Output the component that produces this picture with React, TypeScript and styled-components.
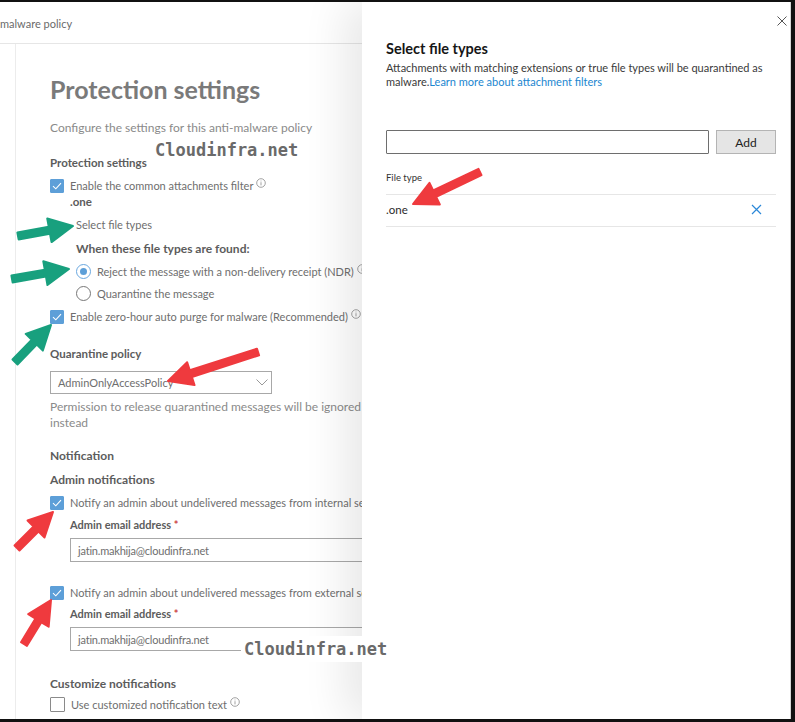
import React from "react";
import styled, { createGlobalStyle } from "styled-components";

const GlobalStyle = createGlobalStyle`
  html, body { margin: 0; padding: 0; background: #fff; }
  body { font-family: "Segoe UI", Lato, "Open Sans", sans-serif; }
  * { box-sizing: border-box; }
`;

const Frame = styled.div`
  position: relative;
  width: 795px;
  height: 722px;
  border-top: 2px solid #111;
  border-right: 4px solid #111;
  border-bottom: 3px solid #111;
  display: flex;
  overflow: hidden;
  background: #fff;
`;

const LeftPage = styled.div`
  width: 362px;
  flex-shrink: 0;
  display: flex;
  flex-direction: column;
  overflow: hidden;
  background: #fff;
`;

const PageHeader = styled.div`
  height: 42px;
  flex-shrink: 0;
  border-bottom: 1px solid #e6e6e6;
  display: flex;
  align-items: center;
  font-size: 11px;
  color: #6a6a6a;
  padding-top: 2px;
`;

const PageBody = styled.div`
  flex: 1;
  display: flex;
`;

const Nav = styled.div`
  width: 16px;
  flex-shrink: 0;
  border-right: 1px solid #ececec;
`;

const Content = styled.div`
  padding-left: 34px;
  display: flex;
  flex-direction: column;
  white-space: nowrap;
`;

const Heading = styled.h1`
  margin: 28px 0 0;
  font-size: 25px;
  line-height: 34px;
  font-weight: 700;
  color: #7a7a7a;
`;

const Muted = styled.div<{ $mt: number }>`
  margin-top: ${(p) => p.$mt}px;
  font-size: 12px;
  line-height: 16px;
  color: #8a8a8a;
`;

const SubHead = styled.div<{ $mt: number; $indent?: number; $size?: number }>`
  margin-top: ${(p) => p.$mt}px;
  margin-left: ${(p) => p.$indent ?? 0}px;
  font-size: ${(p) => p.$size ?? 11.5}px;
  line-height: 16px;
  font-weight: 700;
  color: #5c5c5c;
`;

const Plain = styled.div<{ $mt: number; $indent?: number }>`
  margin-top: ${(p) => p.$mt}px;
  margin-left: ${(p) => p.$indent ?? 0}px;
  font-size: 11px;
  line-height: 16px;
  color: #6e6e6e;
`;

const Row = styled.div<{ $mt: number; $indent?: number }>`
  margin-top: ${(p) => p.$mt}px;
  margin-left: ${(p) => p.$indent ?? 0}px;
  height: 17px;
  display: flex;
  align-items: center;
  gap: 6px;
  font-size: 11px;
  color: #6e6e6e;
`;

const Check = styled.span<{ $on?: boolean }>`
  width: ${(p) => (p.$on ? 14 : 15)}px;
  height: ${(p) => (p.$on ? 14 : 15)}px;
  flex-shrink: 0;
  border-radius: 1px;
  display: inline-flex;
  align-items: center;
  justify-content: center;
  background: ${(p) => (p.$on ? "#5d9fd8" : "#fff")};
  border: 1px solid ${(p) => (p.$on ? "#5d9fd8" : "#8a8a8a")};
`;

const Radio = styled.span<{ $on?: boolean }>`
  width: 15px;
  height: 15px;
  flex-shrink: 0;
  border-radius: 50%;
  border: 1px solid ${(p) => (p.$on ? "#6aa8e0" : "#777")};
  display: inline-flex;
  align-items: center;
  justify-content: center;
  &::after {
    content: "";
    width: 7px;
    height: 7px;
    border-radius: 50%;
    background: ${(p) => (p.$on ? "#5d9fd8" : "transparent")};
  }
`;

const Select = styled.div`
  margin-top: 9px;
  width: 222px;
  height: 23px;
  border: 1px solid #a8a8a8;
  display: flex;
  align-items: center;
  justify-content: space-between;
  padding: 0 3px 0 7px;
  font-size: 11px;
  color: #6e6e6e;
`;

const TextInput = styled.div<{ $mt: number }>`
  margin-top: ${(p) => p.$mt}px;
  margin-left: 20px;
  width: 320px;
  height: 24px;
  border: 1px solid #a8a8a8;
  display: flex;
  align-items: center;
  padding-left: 7px;
  font-size: 11px;
  color: #6e6e6e;
  letter-spacing: -0.2px;
`;

const Required = styled.span`
  color: #c44;
`;

const Panel = styled.div`
  position: relative;
  flex: 1;
  background: #fff;
  border-right: 1px solid #d6d6d6;
  padding: 37px 14px 0 24px;
  box-shadow: -18px 0 40px rgba(0, 0, 0, 0.09);
  display: flex;
  flex-direction: column;
`;

const CloseButton = styled.span`
  position: absolute;
  top: 13px;
  right: 2px;
  width: 12px;
  height: 12px;
  display: flex;
`;

const PanelTitle = styled.h2`
  margin: 0;
  font-size: 14.5px;
  line-height: 20px;
  font-weight: 700;
  color: #161616;
`;

const PanelText = styled.p`
  margin: 2px 0 0;
  font-size: 11px;
  line-height: 14px;
  color: #3a3a3a;
`;

const Link = styled.a`
  color: #1a86d0;
  text-decoration: none;
`;

const AddRow = styled.div`
  margin-top: 41px;
  display: flex;
  gap: 7px;
`;

const AddInput = styled.div`
  flex: 1;
  height: 24px;
  border: 1px solid #6e6e6e;
  border-radius: 1px;
`;

const AddButton = styled.button`
  width: 60px;
  height: 24px;
  border: 1px solid #b4b4b4;
  background: #e5e5e5;
  font-family: inherit;
  font-size: 12px;
  color: #222;
  padding: 0;
`;

const TableHead = styled.div`
  margin-top: 18px;
  font-size: 9.5px;
  line-height: 12px;
  color: #333;
  padding-bottom: 10px;
  border-bottom: 1px solid #e6e6e6;
`;

const TableRow = styled.div`
  height: 32px;
  display: flex;
  align-items: center;
  justify-content: space-between;
  padding-right: 14px;
  padding-bottom: 3px;
  border-bottom: 1px solid #e6e6e6;
  font-size: 11.5px;
  color: #2a2a2a;
`;

const Watermark = styled.div<{ $x: number; $y: number }>`
  position: absolute;
  left: ${(p) => p.$x}px;
  top: ${(p) => p.$y}px;
  padding: 2px 3px;
  background: #fff;
  font-family: "DejaVu Sans Mono", monospace;
  font-weight: 700;
  font-size: 17px;
  line-height: 22px;
  color: #6a6a6a;
  z-index: 3;
`;

const Overlay = styled.svg`
  position: absolute;
  left: 0;
  top: -2px;
  width: 795px;
  height: 722px;
  pointer-events: none;
  z-index: 4;
`;

const Info = () => (
  <svg width="10" height="10" viewBox="0 0 10 10" style={{ marginLeft: -3, marginTop: -6 }}>
    <circle cx="5" cy="5" r="4.3" fill="none" stroke="#8a8a8a" strokeWidth="0.8" />
    <rect x="4.6" y="4.2" width="0.8" height="3.2" fill="#8a8a8a" />
    <rect x="4.6" y="2.6" width="0.8" height="0.8" fill="#8a8a8a" />
  </svg>
);

const Tick = () => (
  <svg width="10" height="8" viewBox="0 0 10 8">
    <path d="M1 4.2 L3.8 6.8 L9 1.2" fill="none" stroke="#fff" strokeWidth="1.1" />
  </svg>
);

const Chevron = () => (
  <svg width="12" height="7" viewBox="0 0 12 7">
    <path d="M0.5 0.5 L6 6 L11.5 0.5" fill="none" stroke="#999" strokeWidth="1" />
  </svg>
);

type ArrowProps = { x1: number; y1: number; x2: number; y2: number; color: string };

const Arrow = ({ x1, y1, x2, y2, color }: ArrowProps) => {
  const dx = x2 - x1;
  const dy = y2 - y1;
  const len = Math.hypot(dx, dy);
  const ux = dx / len;
  const uy = dy / len;
  const nx = -uy;
  const ny = ux;
  const head = 24;
  const half = 12;
  const shaft = 3.5;
  const bx = x2 - ux * head;
  const by = y2 - uy * head;
  const pts = [
    [x1 + nx * shaft, y1 + ny * shaft],
    [bx + nx * shaft, by + ny * shaft],
    [bx + nx * half, by + ny * half],
    [x2, y2],
    [bx - nx * half, by - ny * half],
    [bx - nx * shaft, by - ny * shaft],
    [x1 - nx * shaft, y1 - ny * shaft],
  ]
    .map((p) => p.join(","))
    .join(" ");
  return <polygon points={pts} fill={color} stroke={color} strokeWidth="2" strokeLinejoin="round" />;
};

const green = "#18a07e";
const red = "#ef3a3e";

export default function App() {
  return (
    <>
      <GlobalStyle />
      <Frame>
        <LeftPage>
          <PageHeader>malware policy</PageHeader>
          <PageBody>
            <Nav />
            <Content>
              <Heading>Protection settings</Heading>
              <Muted $mt={14}>Configure the settings for this anti-malware policy</Muted>
              <SubHead $mt={19}>Protection settings</SubHead>
              <Row $mt={6}>
                <Check $on><Tick /></Check>
                Enable the common attachments filter <Info />
              </Row>
              <SubHead $mt={0} $indent={20}>.one</SubHead>
              <Plain $mt={7} $indent={26}>Select file types</Plain>
              <SubHead $mt={8} $indent={26} $size={12}>When these file types are found:</SubHead>
              <Row $mt={6} $indent={26}>
                <Radio $on />
                Reject the message with a non-delivery receipt (NDR) <Info />
              </Row>
              <Row $mt={5} $indent={26}>
                <Radio />
                Quarantine the message
              </Row>
              <Row $mt={6}>
                <Check $on><Tick /></Check>
                Enable zero-hour auto purge for malware (Recommended) <Info />
              </Row>
              <SubHead $mt={21}>Quarantine policy</SubHead>
              <Select>
                AdminOnlyAccessPolicy
                <Chevron />
              </Select>
              <Muted $mt={5}>
                Permission to release quarantined messages will be ignored
                <br />
                instead
              </Muted>
              <SubHead $mt={17} $size={12}>Notification</SubHead>
              <SubHead $mt={8} $size={12}>Admin notifications</SubHead>
              <Row $mt={6}>
                <Check $on><Tick /></Check>
                Notify an admin about undelivered messages from internal senders
              </Row>
              <SubHead $mt={6} $indent={20} $size={11}>
                Admin email address <Required>*</Required>
              </SubHead>
              <TextInput $mt={5}>jatin.makhija@cloudinfra.net</TextInput>
              <Row $mt={22}>
                <Check $on><Tick /></Check>
                Notify an admin about undelivered messages from external senders
              </Row>
              <SubHead $mt={5} $indent={20} $size={11}>
                Admin email address <Required>*</Required>
              </SubHead>
              <TextInput $mt={5}>jatin.makhija@cloudinfra.net</TextInput>
              <SubHead $mt={25} $size={12}>Customize notifications</SubHead>
              <Row $mt={4}>
                <Check />
                Use customized notification text <Info />
              </Row>
            </Content>
          </PageBody>
        </LeftPage>

        <Panel>
          <CloseButton>
            <svg width="12" height="12" viewBox="0 0 12 12">
              <path d="M1.5 1.5 L10.5 10.5 M10.5 1.5 L1.5 10.5" stroke="#555" strokeWidth="1" />
            </svg>
          </CloseButton>
          <PanelTitle>Select file types</PanelTitle>
          <PanelText>
            Attachments with matching extensions or true file types will be quarantined as
            <br />
            malware.<Link href="#">Learn more about attachment filters</Link>
          </PanelText>
          <AddRow>
            <AddInput />
            <AddButton>Add</AddButton>
          </AddRow>
          <TableHead>File type</TableHead>
          <TableRow>
            .one
            <svg width="11" height="11" viewBox="0 0 11 11">
              <path d="M1 1 L10 10 M10 1 L1 10" stroke="#2b88d8" strokeWidth="1.2" />
            </svg>
          </TableRow>
        </Panel>

        <Watermark $x={152} $y={135}>Cloudinfra.net</Watermark>
        <Watermark $x={241} $y={634}>Cloudinfra.net</Watermark>

        <Overlay viewBox="0 0 795 722">
          <Arrow x1={18} y1={236} x2={73} y2={226} color={green} />
          <Arrow x1={12} y1={279} x2={69} y2={269} color={green} />
          <Arrow x1={15} y1={362} x2={51} y2={325} color={green} />
          <Arrow x1={258} y1={352} x2={168} y2={381} color={red} />
          <Arrow x1={480} y1={172} x2={413} y2={204} color={red} />
          <Arrow x1={17} y1={548} x2={53} y2={512} color={red} />
          <Arrow x1={24} y1={644} x2={51} y2={600} color={red} />
        </Overlay>
      </Frame>
    </>
  );
}
